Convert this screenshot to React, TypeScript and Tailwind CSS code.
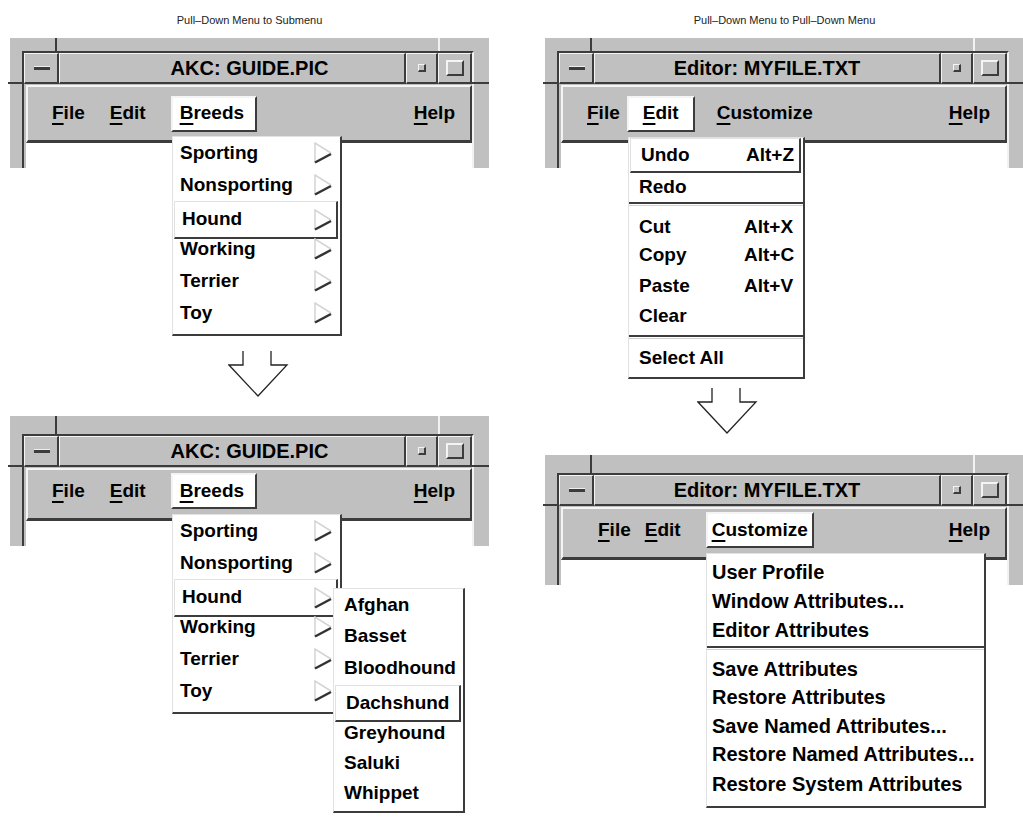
import React from "react";

type Row =
  | { kind: "item"; label: string; h: string; accel?: string; arrow?: boolean; hl?: boolean }
  | { kind: "sep" }
  | { kind: "gap"; h: string };

type BarItem = { label: string; cls: string; active?: boolean };

const font = "font-['Liberation_Sans',Arial,sans-serif]";

function Arrow() {
  return (
    <svg width="20" height="22" viewBox="0 0 20 22" className="shrink-0">
      <path d="M2 21 L2 1 L18 11" fill="none" stroke="#d4d4d4" strokeWidth="1.5" />
      <path d="M2 20.5 L18 12" fill="none" stroke="#333" strokeWidth="2.5" />
    </svg>
  );
}

function Label({ text }: { text: string }) {
  return (
    <span>
      <span className="underline decoration-2 underline-offset-[4px]">{text[0]}</span>
      {text.slice(1)}
    </span>
  );
}

function Menu({
  rows,
  pos,
  pl,
  accelW,
  size = "text-[19px]",
}: {
  rows: Row[];
  pos: string;
  pl: string;
  accelW?: string;
  size?: string;
}) {
  return (
    <div
      className={`absolute ${pos} ${size} z-10 flex flex-col bg-white font-bold text-black border-l border-t border-l-[#e2e2e2] border-t-[#e2e2e2] border-r-2 border-b-2 border-r-[#3c3c3c] border-b-[#3c3c3c]`}
    >
      {rows.map((r, i) => {
        if (r.kind === "sep")
          return (
            <div
              key={i}
              className="h-[4px] shrink-0 border-t-2 border-t-[#3c3c3c] border-b border-b-[#d0d0d0]"
            />
          );
        if (r.kind === "gap") return <div key={i} className={`${r.h} shrink-0`} />;
        const inner = (
          <>
            <span className={accelW ? accelW : "flex-1"}>{r.label}</span>
            {r.accel && <span>{r.accel}</span>}
            {r.arrow && <Arrow />}
          </>
        );
        if (r.hl)
          return (
            <div
              key={i}
              className={`${r.h} shrink-0 ml-[1px] mr-[2px] flex items-center bg-white border-l border-t border-l-[#e2e2e2] border-t-[#e2e2e2] border-r-2 border-b-2 border-r-[#3c3c3c] border-b-[#3c3c3c] pr-[3px] ${pl}`}
            >
              {inner}
            </div>
          );
        return (
          <div key={i} className={`${r.h} shrink-0 flex items-center pr-[7px] ${pl}`}>
            {inner}
          </div>
        );
      })}
    </div>
  );
}

const raised =
  "border-t border-l border-t-[#f4f4f4] border-l-[#f4f4f4] border-r-2 border-b-2 border-r-[#3c3c3c] border-b-[#3c3c3c]";

function Window({
  title,
  titleCls,
  items,
  low,
  children,
}: {
  title: string;
  titleCls: string;
  items: BarItem[];
  low?: boolean;
  children?: React.ReactNode;
}) {
  return (
    <div className="relative w-[479px] h-[130px] bg-[#c0c0c0] shrink-0">
      {/* resize-corner notches of the frame */}
      <div className={`absolute left-[45px] top-0 w-[2px] bg-[#3c3c3c] ${low ? "h-[18px]" : "h-[13px]"}`} />
      <div className={`absolute left-[428px] top-0 w-[2px] bg-[#f2f2f2] ${low ? "h-[18px]" : "h-[13px]"}`} />
      <div className={`absolute left-[-2px] w-[14px] h-[2px] bg-[#3c3c3c] ${low ? "top-[49px]" : "top-[44px]"}`} />
      <div className={`absolute left-[462px] w-[17px] h-[2px] bg-[#3c3c3c] ${low ? "top-[49px]" : "top-[44px]"}`} />

      <div
        className={`ml-[12px] w-[452px] flex flex-col border-l-2 border-t-2 border-r-2 border-l-[#3c3c3c] border-t-[#3c3c3c] border-r-[#f2f2f2] ${
          low ? "mt-[18px] h-[112px]" : "mt-[13px] h-[117px]"
        }`}
      >
        {/* title bar */}
        <div className="flex h-[31px] shrink-0">
          <div className={`w-[35px] flex items-center justify-center ${raised}`}>
            <div className="w-[16px] h-[4px] border-t border-t-[#eeeeee] bg-[#3c3c3c] ml-[2px]" />
          </div>
          <div className={`w-[347px] flex items-center justify-center text-[20px] font-bold text-black ${raised} ${titleCls}`}>
            {title}
          </div>
          <div className={`w-[32px] flex items-center justify-center ${raised}`}>
            <div className="w-[8px] h-[8px] bg-[#c0c0c0] border-t border-l border-t-[#f4f4f4] border-l-[#f4f4f4] border-r-2 border-b-2 border-r-[#3c3c3c] border-b-[#3c3c3c]" />
          </div>
          <div className={`w-[34px] flex items-center justify-center ${raised}`}>
            <div className="w-[18px] h-[16px] bg-[#c0c0c0] border-t-2 border-l-2 border-t-[#f4f4f4] border-l-[#f4f4f4] border-r-2 border-b-2 border-r-[#3c3c3c] border-b-[#3c3c3c]" />
          </div>
        </div>
        {/* menu bar */}
        <div
          className={`mt-[1px] ml-[2px] shrink-0 flex text-[19px] font-bold text-black border-t-2 border-l-2 border-t-[#f4f4f4] border-l-[#f4f4f4] border-r-2 border-b-[3px] border-r-[#3c3c3c] border-b-[#3c3c3c] ${
            low ? "h-[53px] items-start pt-[3px]" : "h-[58px] items-center"
          }`}
        >
          {items.map((it) => (
            <div
              key={it.label}
              className={`h-[36px] flex items-center border-2 ${it.cls} ${
                it.active
                  ? "bg-white border-t-[#f4f4f4] border-l-[#f4f4f4] border-r-[#3c3c3c] border-b-[#3c3c3c]"
                  : "border-transparent"
              }`}
            >
              <Label text={it.label} />
            </div>
          ))}
        </div>
        <div className="flex-1 ml-[2px] bg-white" />
      </div>
      {children}
    </div>
  );
}

const breeds: Row[] = [
  { kind: "item", label: "Sporting", h: "h-[32px]", arrow: true },
  { kind: "item", label: "Nonsporting", h: "h-[32px]", arrow: true },
  { kind: "item", label: "Hound", h: "h-[38px]", arrow: true, hl: true },
  { kind: "gap", h: "-mt-[6px]" },
  { kind: "item", label: "Working", h: "h-[32px]", arrow: true },
  { kind: "item", label: "Terrier", h: "h-[32px]", arrow: true },
  { kind: "item", label: "Toy", h: "h-[32px]", arrow: true },
  { kind: "gap", h: "h-[5px]" },
];

const hounds: Row[] = [
  { kind: "item", label: "Afghan", h: "h-[32px]" },
  { kind: "item", label: "Basset", h: "h-[31px]" },
  { kind: "item", label: "Bloodhound", h: "h-[33px]" },
  { kind: "item", label: "Dachshund", h: "h-[37px]", hl: true },
  { kind: "gap", h: "-mt-[4px]" },
  { kind: "item", label: "Greyhound", h: "h-[30px]" },
  { kind: "item", label: "Saluki", h: "h-[30px]" },
  { kind: "item", label: "Whippet", h: "h-[30px]" },
];

const editRows: Row[] = [
  { kind: "item", label: "Undo", accel: "Alt+Z", h: "h-[35px]", hl: true },
  { kind: "item", label: "Redo", h: "h-[29px]" },
  { kind: "sep" },
  { kind: "gap", h: "h-[7px]" },
  { kind: "item", label: "Cut", accel: "Alt+X", h: "h-[28px]" },
  { kind: "item", label: "Copy", accel: "Alt+C", h: "h-[28px]" },
  { kind: "item", label: "Paste", accel: "Alt+V", h: "h-[34px]" },
  { kind: "item", label: "Clear", h: "h-[26px]" },
  { kind: "gap", h: "h-[6px]" },
  { kind: "sep" },
  { kind: "item", label: "Select All", h: "h-[38px]" },
];

const customRows: Row[] = [
  { kind: "gap", h: "h-[3px]" },
  { kind: "item", label: "User Profile", h: "h-[30px]" },
  { kind: "item", label: "Window Attributes...", h: "h-[27px]" },
  { kind: "item", label: "Editor Attributes", h: "h-[32px]" },
  { kind: "sep" },
  { kind: "gap", h: "h-[5px]" },
  { kind: "item", label: "Save Attributes", h: "h-[28px]" },
  { kind: "item", label: "Restore Attributes", h: "h-[28px]" },
  { kind: "item", label: "Save Named Attributes...", h: "h-[29px]" },
  { kind: "item", label: "Restore Named Attributes...", h: "h-[27px]" },
  { kind: "item", label: "Restore System Attributes", h: "h-[34px]" },
];

function DownArrow() {
  return (
    <svg width="62" height="48" viewBox="0 0 62 48">
      <path
        d="M15 1 L15 15 L1 15 L30 46 L59 15 L43 15 L43 1"
        fill="none"
        stroke="#222"
        strokeWidth="1.3"
      />
    </svg>
  );
}

const breedsBar: BarItem[] = [
  { label: "File", cls: "ml-[15px] px-[7px]" },
  { label: "Edit", cls: "ml-[7px] px-[7px]" },
  { label: "Breeds", cls: "ml-[16px] pl-[7px] pr-[11px]", active: true },
  { label: "Help", cls: "ml-auto mr-[6px] px-[7px]" },
];

export default function App() {
  return (
    <div className={`w-[1023px] h-[817px] bg-white overflow-hidden flex pl-[10px] gap-[56px] ${font}`}>
      {/* left column */}
      <div className="w-[479px] shrink-0 flex flex-col">
        <div className="h-[38px] pt-[13px] text-[11px] leading-[14px] text-center text-[#222]">
          Pull–Down Menu to Submenu
        </div>
        <Window title="AKC: GUIDE.PIC" titleCls="pl-[35px]" items={breedsBar}>
          <Menu rows={breeds} pos="left-[162px] top-[98px] w-[170px]" pl="pl-[7px]" />
        </Window>
        <div className="h-[248px] shrink-0 pt-[182px] pl-[218px]">
          <DownArrow />
        </div>
        <Window title="AKC: GUIDE.PIC" titleCls="pl-[35px]" items={breedsBar} low>
          <Menu rows={breeds} pos="left-[162px] top-[98px] w-[170px]" pl="pl-[7px]" />
          <Menu rows={hounds} pos="left-[323px] top-[172px] w-[132px] h-[225px]" pl="pl-[10px]" />
        </Window>
      </div>

      {/* right column */}
      <div className="w-[479px] shrink-0 flex flex-col">
        <div className="h-[38px] pt-[13px] text-[11px] leading-[14px] text-center text-[#222]">
          Pull–Down Menu to Pull–Down Menu
        </div>
        <Window
          title="Editor: MYFILE.TXT"
          titleCls=""
          items={[
            { label: "File", cls: "ml-[15px] px-[7px]" },
            { label: "Edit", cls: "-ml-[2px] pl-[14px] pr-[14px]", active: true },
            { label: "Customize", cls: "ml-[13px] px-[7px]" },
            { label: "Help", cls: "ml-auto mr-[6px] px-[7px]" },
          ]}
        >
          <Menu rows={editRows} pos="left-[83px] top-[99px] w-[177px]" pl="pl-[10px]" accelW="w-[105px]" />
        </Window>
        <div className="h-[287px] shrink-0 pt-[219px] pl-[152px]">
          <DownArrow />
        </div>
        <Window
          title="Editor: MYFILE.TXT"
          titleCls=""
          low
          items={[
            { label: "File", cls: "ml-[26px] px-[7px]" },
            { label: "Edit", cls: "ml-[-4px] px-[7px]" },
            { label: "Customize", cls: "ml-[16px] pl-[4px] pr-[4px]", active: true },
            { label: "Help", cls: "ml-auto mr-[6px] px-[7px]" },
          ]}
        >
          <Menu
            rows={customRows}
            pos="left-[161px] top-[98px] w-[280px] h-[255px]"
            pl="pl-[5px]"
            size="text-[20px]"
          />
        </Window>
      </div>
    </div>
  );
}
